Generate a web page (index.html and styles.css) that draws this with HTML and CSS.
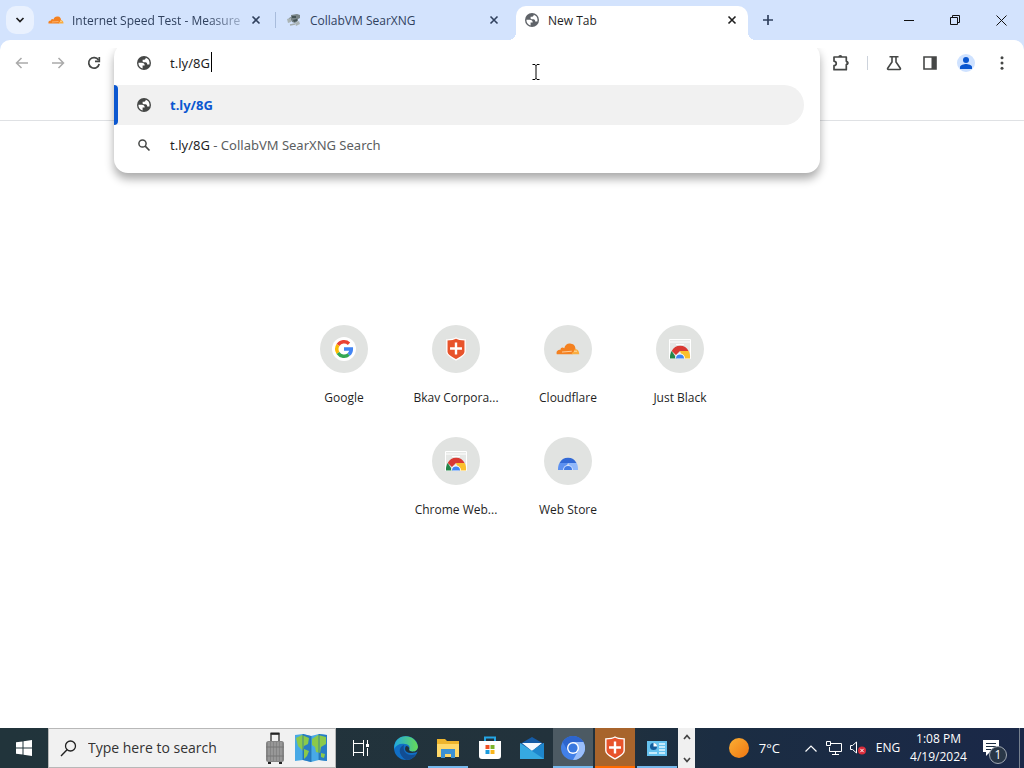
FILE: index.html
```html
<!DOCTYPE html>
<html lang="en">
<head>
<meta charset="utf-8">
<title>New Tab</title>
<link rel="stylesheet" href="styles.css">
</head>
<body>
<svg class="defs" width="0" height="0" aria-hidden="true">
  <symbol id="globe" viewBox="2 2 20 20"><circle cx="12" cy="12" r="10" fill="currentColor"/><path fill="#fff" d="M4 11.500h5c2.500 0 4 1.500 4 4h-3v4.200C6.500 19 4 16 4 11.500zM14.500 4.400v.6c0 1.300-1 2.200-2.200 2.200H10v2.300c0 1.300 1 1.500 2 1.500h2c2 0 2.500 1.500 2.500 3h3.200c1-4.600-1.200-8.500-5.200-9.600z"/></symbol>
  <symbol id="cross" viewBox="0 0 10 10"><path d="M1.500 1.500l7 7M8.500 1.500l-7 7" fill="none" stroke="currentColor" stroke-width="1.600"/></symbol>
  <symbol id="cloud" viewBox="0 0 32 16"><path fill="#f48120" d="M1 15c-1-4 1-6 5-6 0-3 3-4 5-2 1-5 5-7 9-6 4 0 6 4 6 7l-4 7z"/><path fill="#faad3f" d="M21 15c0-3 3-2 4-7 4 0 6 3 6 7z"/><path d="M8 12l13-1M24 11l4 0" stroke="#ffe3c0" stroke-width="1"/></symbol>
  <symbol id="webstore" viewBox="0 0 24 24"><path fill="#e6e8e6" stroke="#fff" d="M1.500 2.500h21v19h-21z"/><path d="M2 5h20M8 7.500h8" stroke="#fff"/><path fill="#d93a33" d="M3.700 14a9.500 9.500 0 0 1 16.900 0H12l-4 4z"/><path fill="#23864a" d="M2 21.500c-.3-3 .5-5.500 1.700-7.500l5 7.500z"/><path fill="#fbc02d" d="M12 14h8.600c1.300 2 1.700 4.500 1.400 7.500h-7z"/><path fill="#fff" d="M7 21.500a5 5 0 0 1 10 0z"/><path fill="#4285f4" d="M8 21.500a4 4 0 0 1 8 0z"/></symbol>
  <symbol id="shield" viewBox="0 0 24 26"><path fill="#e8532b" stroke="#fff" stroke-width="1.500" d="M12 1c3 2 7 2 10 2v13c0 4-5 6-10 9C7 22 2 20 2 16V3c3 0 7 0 10-2z"/><path d="M12 6v13M5.500 12.500h13" stroke="#fff" stroke-width="2.600"/></symbol>
</svg>

<div class="screen">
  <header class="tabstrip">
    <button class="tab-search" aria-label="Search tabs"><svg width="10" height="10" viewBox="0 0 10 10"><path d="M1.500 3L5 6.500 8.500 3" fill="none" stroke="#1f1f1f" stroke-width="1.700"/></svg></button>
    <nav class="tabs" aria-label="Tabs">
      <div class="tab">
        <svg class="favicon" width="16" height="16"><use href="#cloud"/></svg>
        <span class="tab-title faded">Internet Speed Test - Measure</span>
        <button class="tab-close" aria-label="Close tab"><svg width="10" height="10"><use href="#cross"/></svg></button>
      </div>
      <div class="tab divided">
        <svg class="favicon" width="16" height="16" viewBox="0 0 16 16"><path fill="#788487" d="M5 3l6-1 3 1v3l-2 1v2l-3 2-3-1-1-2-3 1 1-3 2-1z"/><path fill="#aab4b5" d="M1 7l4-1v4l-3 1zM9 11l4-2 1 3-4 2z"/><path fill="#445355" d="M6 4h4v2H6zM7 8l4-1v2l-3 1z"/><path d="M4 13l5-1" stroke="#a3acac" stroke-width="1.500"/></svg>
        <span class="tab-title">CollabVM SearXNG</span>
        <button class="tab-close" aria-label="Close tab"><svg width="10" height="10"><use href="#cross"/></svg></button>
      </div>
      <div class="tab active">
        <svg class="favicon gray" width="14" height="14"><use href="#globe"/></svg>
        <span class="tab-title">New Tab</span>
        <button class="tab-close" aria-label="Close tab"><svg width="10" height="10"><use href="#cross"/></svg></button>
      </div>
    </nav>
    <button class="new-tab" aria-label="New tab"><svg width="12" height="12" viewBox="0 0 12 12"><path d="M6 1v10M1 6h10" stroke="#30415e" stroke-width="1.700"/></svg></button>
    <div class="window-controls">
      <button aria-label="Minimize"><svg width="10" height="10" viewBox="0 0 10 10"><path d="M0 5.500h10" stroke="#111"/></svg></button>
      <button aria-label="Restore"><svg width="10" height="10" viewBox="0 0 10 10"><path d="M.5 2.500h7v7h-7zM2.500 2.500v-2h7v7h-2" fill="none" stroke="#111"/></svg></button>
      <button aria-label="Close"><svg width="11" height="11" viewBox="0 0 11 11"><path d="M.5.5l10 10M10.500.5l-10 10" stroke="#111"/></svg></button>
    </div>
  </header>

  <section class="chrome">
    <div class="toolbar">
      <div class="nav-buttons">
        <button class="disabled" aria-label="Back"><svg width="14" height="12" viewBox="0 0 14 12"><path d="M13 6H1.500M6.500 1l-5 5 5 5" fill="none" stroke="currentColor" stroke-width="1.500"/></svg></button>
        <button class="disabled" aria-label="Forward"><svg width="14" height="12" viewBox="0 0 14 12"><path d="M1 6h11.500M7.500 1l5 5-5 5" fill="none" stroke="currentColor" stroke-width="1.500"/></svg></button>
        <button aria-label="Reload"><svg width="14" height="14" viewBox="0 0 14 14"><path d="M11.500 4A5.300 5.300 0 1 0 12.200 8" fill="none" stroke="currentColor" stroke-width="1.700"/><path d="M12.300 1v4.400H8" fill="none" stroke="currentColor" stroke-width="1.700"/></svg></button>
      </div>
      <div class="omnibox">
        <div class="popup">
          <div class="address-row">
            <svg width="14" height="14"><use href="#globe"/></svg>
            <input type="text" value="t.ly/8G" aria-label="Address and search bar">
            <span class="caret"></span>
          </div>
          <button class="suggestion selected"><svg width="14" height="14"><use href="#globe"/></svg><b>t.ly/8G</b></button>
          <button class="suggestion"><svg width="14" height="14" viewBox="0 0 14 14"><circle cx="5.500" cy="5.500" r="3.600" fill="none" stroke="currentColor" stroke-width="1.500"/><path d="M8.200 8.200l4.300 4.300" stroke="currentColor" stroke-width="1.700"/></svg><span>t.ly/8G<span class="hint"> - CollabVM SearXNG Search</span></span></button>
          <svg class="pointer" width="8" height="16" viewBox="0 0 8 16"><path d="M.5.5H3l1 1 1-1h2.500M4 1v14M.5 15.500H3l1-1 1 1h2.500" fill="none" stroke="#000"/></svg>
        </div>
      </div>
      <div class="actions">
        <button aria-label="Extensions"><svg width="18" height="18" viewBox="0 0 18 18"><path d="M2 3h12.300v4.300c2 .2 2 3.200 0 3.400v5H2v-4c3-.5 3-4 0-4.500z" fill="none" stroke="currentColor" stroke-width="1.700" stroke-linejoin="round"/><path d="M6.300 3a2 2 0 0 1 4 0zM14.500 7a2 2 0 0 1 0 4z" fill="currentColor"/></svg></button>
        <span class="separator"></span>
        <button aria-label="Experiments"><svg width="16" height="16" viewBox="0 0 16 16"><path d="M3.500 1.800h9M6 2v5l-4.300 6.300c-.4.600 0 1.200.6 1.200h11.400c.6 0 1-.6.600-1.200L10 7V2" fill="none" stroke="currentColor" stroke-width="1.600"/></svg></button>
        <button aria-label="Side panel"><svg width="14" height="14" viewBox="0 0 14 14"><path d="M1 1h12v12H1z" fill="none" stroke="currentColor" stroke-width="1.600"/><path d="M8.500 1H13v12H8.500z" fill="currentColor"/></svg></button>
        <button aria-label="Profile"><svg width="18" height="18" viewBox="0 0 18 18"><circle cx="9" cy="9" r="9" fill="#cfe2ff"/><circle cx="9" cy="6" r="3" fill="#0b57d0"/><path d="M3 15v-2c0-2 4-3 6-3s6 1 6 3v2z" fill="#0b57d0"/></svg></button>
        <button aria-label="Menu"><svg width="4" height="14" viewBox="0 0 4 14" fill="currentColor"><circle cx="2" cy="1.700" r="1.500"/><circle cx="2" cy="7" r="1.500"/><circle cx="2" cy="12.300" r="1.500"/></svg></button>
      </div>
    </div>
    <div class="bookmarks"></div>
  </section>

  <main class="page">
    <div class="shortcuts">
      <a href="#"><span class="disc"><svg width="24" height="24" viewBox="0 0 24 24"><circle cx="12" cy="12" r="12" fill="#fff"/><g fill="none" stroke-width="3.500"><path d="M6 8a7.300 7.300 0 0 1 11-1.300" stroke="#ea4335"/><path d="M6 8a7.300 7.300 0 0 0 0 8" stroke="#fbbc05"/><path d="M6 16a7.300 7.300 0 0 0 10.800 1.500" stroke="#34a853"/><path d="M16.800 17.500A7 7 0 0 0 19.300 12H12" stroke="#4285f4"/></g></svg></span><span class="label">Google</span></a>
      <a href="#"><span class="disc"><svg width="22" height="24"><use href="#shield"/></svg></span><span class="label">Bkav Corpora...</span></a>
      <a href="#"><span class="disc"><svg width="24" height="12"><use href="#cloud"/></svg></span><span class="label">Cloudflare</span></a>
      <a href="#"><span class="disc"><svg width="24" height="24"><use href="#webstore"/></svg></span><span class="label">Just Black</span></a>
      <a href="#"><span class="disc"><svg width="24" height="24"><use href="#webstore"/></svg></span><span class="label">Chrome Web...</span></a>
      <a href="#"><span class="disc"><svg width="24" height="24" viewBox="0 0 24 24"><path fill="#3269d6" d="M3.500 14a9.500 9.500 0 0 1 17 0z"/><path fill="#5d91f0" d="M3.500 14C2.300 16 2 18 2 21h7l3-7z"/><path fill="#91b8fa" d="M12 14h8.500c1.300 2 1.500 4 1.500 7h-7z"/><path fill="#cfdfff" d="M7 21a5 5 0 0 1 10 0z"/><path fill="#427ce5" d="M8 21a4 4 0 0 1 8 0z"/></svg></span><span class="label">Web Store</span></a>
    </div>
  </main>

  <footer class="taskbar">
    <button class="start" aria-label="Start"><svg width="16" height="16" viewBox="0 0 16 16" fill="#fff"><path d="M0 2.300L6.500 1.400v6.100H0zM7.500 1.200L16 0v7.500H7.500zM0 8.500h6.500v6.100L0 13.700zM7.500 8.500H16V16l-8.500-1.200z"/></svg></button>
    <label class="search">
      <svg width="17" height="17" viewBox="0 0 17 17"><circle cx="10.500" cy="6" r="5" fill="none" stroke="#222" stroke-width="1.300"/><path d="M7 9.700L1 16" stroke="#222" stroke-width="1.400"/></svg>
      <input type="text" placeholder="Type here to search" aria-label="Type here to search">
      <svg width="20" height="33" viewBox="0 0 20 33"><path d="M6 9V2h8v7" fill="none" stroke="#474747" stroke-width="1.500"/><path d="M5.500 1.500h9" stroke="#222" stroke-width="2"/><rect x="1" y="9" width="18" height="21" rx="2.500" fill="#858585"/><path d="M4 10v19M7 10v19M10 10v19M13 10v19M16 10v19" stroke="#aaa"/><path d="M1 15h18M1 24h18" stroke="#777"/><path d="M3 30h3v2H3zM14 30h3v2h-3z" fill="#222"/></svg>
      <svg width="34" height="30" viewBox="0 0 34 30"><path d="M1 2l8-1 8 2 8-2 8 1v26l-8-1-8 2-8-2-8 1z" fill="#48a9e6"/><path d="M9 1l8 2v26l-8-2zM25 1l8 1v26l-8-1z" fill="#287cc5"/><path d="M2 5l6-3 7 3-1 6-4 2-1 5-5-5zM10 16l5 2-2 5-3 3zM18 6l6-4 8 2v7l-5 3-1 6-4-1-1-5-3-2zM27 20l4 1-1 4-3-1z" fill="#8bc94a"/><path d="M9 1v26M17 3v26M25 1v26" stroke="#216da8" stroke-width=".7"/></svg>
    </label>
    <button class="task-view" aria-label="Task View"><svg width="17" height="16" viewBox="0 0 17 16" fill="none" stroke="#fff"><path d="M1.500 0v3M11.500 0v3M1 3.500h11M1.500 3.500v9M11.500 3.500v9M1 12.500h11M1.500 13v3M11.500 13v3M15.500 0v4M15.500 8v8"/><path d="M14 4h3v3h-3z" fill="#fff" stroke="none"/></svg></button>
    <div class="apps">
      <button aria-label="Edge"><svg width="24" height="24" viewBox="0 0 24 24"><defs><linearGradient id="eg" x1="0" x2="1"><stop stop-color="#21a9df"/><stop offset="1" stop-color="#67db55"/></linearGradient></defs><circle cx="12" cy="12" r="12" fill="#116fc5"/><path d="M.3 10C2-3 22-3 24 11c0 5-7 6-9 3 2-4-1-6-4-6C6 7 2 9 .3 13z" fill="url(#eg)"/><path d="M10 9c-6 2-6 10 2 15 5 0 8-3 10-6-8 3-14-2-12-9z" fill="#124d93"/><path d="M12 10c-3 5 1 9 11 6 2-2 1-4 1-5 0 5-7 6-9 3 1-2-1-4-3-4z" fill="#22323c"/></svg></button>
      <button class="open" aria-label="File Explorer"><svg width="22" height="19" viewBox="0 0 22 19"><path d="M0 0h8l2 2h12v16H0z" fill="#eeb52d"/><path d="M0 5h22v13H0z" fill="#ffd96a"/><path d="M4 10h14v9h-4v-4H8v4H4z" fill="#3b91d4"/></svg></button>
      <button aria-label="Microsoft Store"><svg width="24" height="24" viewBox="0 0 24 24"><path d="M7 6V1.500h10V6" fill="none" stroke="#24a6e6" stroke-width="2"/><path d="M1 5h22v15c0 2-1 3-3 3H4c-2 0-3-1-3-3z" fill="#fff"/><path d="M7.500 9h4v4h-4z" fill="#f05023"/><path d="M12.500 9h4v4h-4z" fill="#7db52b"/><path d="M7.500 14h4v4h-4z" fill="#1b9bdd"/><path d="M12.500 14h4v4h-4z" fill="#f9b51b"/></svg></button>
      <button aria-label="Mail"><svg width="24" height="22" viewBox="0 0 24 22"><path d="M0 7l12-7 12 7v15H0z" fill="#155ba5"/><path d="M2 6h20L12 14z" fill="#f5faff"/><path d="M0 6l12 8 12-8v16H0z" fill="#36a9e1"/><path d="M12 14l12-8v16z" fill="#1e86cc"/></svg></button>
      <button class="current" aria-label="Chromium"><svg width="24" height="24" viewBox="0 0 24 24"><circle cx="12" cy="12" r="12" fill="#4280e8"/><path d="M1.600 6A12 12 0 0 1 22.400 6H12L7 15z" fill="#2d65ce"/><path d="M12 6h10.400A12 12 0 0 1 12 24l5-9z" fill="#9abefa"/><circle cx="12" cy="12" r="6" fill="#fff"/><circle cx="12" cy="12" r="4.600" fill="#3978df"/></svg></button>
      <button class="alert" aria-label="Bkav"><svg width="22" height="24"><use href="#shield"/></svg></button>
      <button class="open" aria-label="Control Panel"><svg width="20" height="15" viewBox="0 0 20 15"><path d="M0 0h20v15H0z" fill="#66c2ef"/><circle cx="6.500" cy="5.500" r="3.500" fill="#145c9c"/><path d="M6.500 5.500V2A3.500 3.500 0 0 1 10 5.500z" fill="#fff"/><path d="M12 3h6M12 6h6M12 9h6M2 12h8M12 12h6" stroke="#e6f8ff" stroke-width="1.300"/></svg></button>
    </div>
    <div class="scroller">
      <button aria-label="Scroll up"><svg width="8" height="6" viewBox="0 0 8 6"><path d="M1 5l3-3.500L7 5" fill="none" stroke="#444" stroke-width="1.700"/></svg></button>
      <button aria-label="Scroll down"><svg width="8" height="6" viewBox="0 0 8 6"><path d="M1 1l3 3.500L7 1" fill="none" stroke="#444" stroke-width="1.700"/></svg></button>
    </div>
    <div class="tray">
      <button class="weather"><span class="sun"></span>7°C</button>
      <button class="chevron" aria-label="Show hidden icons"><svg width="12" height="7" viewBox="0 0 12 7"><path d="M.5 6.500L6 1l5.500 5.500" fill="none" stroke="#fff" stroke-width="1.200"/></svg></button>
      <button class="tray-icon" aria-label="Network"><svg width="16" height="14" viewBox="0 0 16 14" fill="none" stroke="#fff"><path d="M5 2.500h10.500v8H3.500V6M9.500 11v2M6 13.500h7M.5.500h4v4h-4z"/></svg></button>
      <button class="tray-icon" aria-label="Volume muted"><svg width="16" height="14" viewBox="0 0 16 14"><path d="M.5 4.500h2l4-3.500v11l-4-3.500h-2z" fill="none" stroke="#fff"/><circle cx="12" cy="9.500" r="4" fill="#d92b3a"/><path d="M10.300 7.800l3.400 3.400M13.700 7.800l-3.400 3.400" stroke="#fff"/></svg></button>
      <button class="lang">ENG</button>
      <button class="clock"><span>1:08 PM</span><span>4/19/2024</span></button>
      <button class="notices" aria-label="1 notification"><svg width="18" height="18" viewBox="0 0 18 18"><path d="M1 1h16v12H8l-4 4v-4H1z" fill="#fff"/><path d="M4 4.500h10M4 7.500h10M4 10.500h6" stroke="#1b2d42"/></svg><span class="badge">1</span></button>
      <button class="desktop" aria-label="Show desktop"></button>
    </div>
  </footer>
</div>
</body>
</html>
```
FILE: styles.css
```css
* { box-sizing: border-box; }
body { margin: 0; font: 12px/16px "Open Sans", "Noto Sans", sans-serif; color: #1f1f1f; background: #fff; }
button, input { font: inherit; color: inherit; border: 0; padding: 0; margin: 0; background: none; outline: 0; }
button { display: flex; align-items: center; justify-content: center; }
svg { display: block; flex: none; }
.defs { position: absolute; }
.screen { min-height: 100vh; display: flex; flex-direction: column; }

.tabstrip { display: flex; align-items: center; height: 40px; padding-left: 6px; background: #d3e3fd; }
.tab-search { width: 28px; height: 28px; border-radius: 10px; background: #e9f1fe; }
.tabs { display: flex; align-self: flex-end; gap: 6px; margin-left: 6px; }
.tab { position: relative; display: flex; align-items: center; gap: 8px; width: 232px; height: 34px; padding: 0 8px 6px; color: #30415e; }
.favicon { width: 16px; }
.favicon.gray { color: #5f6368; }
.tab-title { flex: 1; padding-top: 2px; overflow: hidden; white-space: nowrap; }
.faded { -webkit-mask-image: linear-gradient(90deg, #000 80%, #0005); mask-image: linear-gradient(90deg, #000 80%, #0005); }
.tab-close { width: 16px; height: 16px; }
.divided::before { content: ""; position: absolute; left: -3px; top: 6px; width: 1px; height: 16px; background: #a8bcdc; }
.active { background: #fff; border-radius: 10px 10px 0 0; color: #1f1f1f; }
.active::before, .active::after { content: ""; position: absolute; bottom: 0; width: 8px; height: 8px; }
.active::before { left: -8px; background: radial-gradient(circle at 0 0, transparent 8px, #fff 8px); }
.active::after { right: -8px; background: radial-gradient(circle at 100% 0, transparent 8px, #fff 8px); }
.new-tab { width: 28px; height: 28px; margin-left: 6px; }
.window-controls { display: flex; margin-left: auto; }
.window-controls button { width: 46px; height: 40px; }

.chrome { background: linear-gradient(#d3e3fd 10px, #fff 10px); border-bottom: 1px solid #dfe1e4; }
.toolbar { display: flex; height: 46px; padding-left: 4px; background: #fff; border-radius: 10px 10px 0 0; color: #454746; }
.bookmarks { height: 34px; }
.nav-buttons { display: flex; width: 110px; }
.nav-buttons button { width: 36px; }
.nav-buttons .disabled { color: #aaa; }
.omnibox { position: relative; flex: 1; }
.popup { position: absolute; z-index: 2; top: 3px; left: 0; right: 0; padding-bottom: 8px; background: #fff; border-radius: 14px; box-shadow: 0 6px 10px #0005; clip-path: inset(5px -16px -20px -16px); font-family: "Noto Sans", "Open Sans", sans-serif; font-size: 13px; line-height: 20px; color: #1f1f1f; }
.address-row { position: relative; display: flex; align-items: center; gap: 19px; height: 42px; padding: 0 23px 2px; }
.address-row svg, .suggestion svg { color: #454746; }
.address-row input { flex: 1; min-width: 0; }
.caret { position: absolute; left: 97px; top: 9px; width: 1px; height: 20px; background: #000; }
.suggestion { position: relative; width: calc(100% - 16px); height: 40px; padding-left: 23px; gap: 19px; justify-content: flex-start; border-radius: 0 20px 20px 0; }
.selected { background: #f1f1f1; color: #0b57d0; }
.selected::before { content: ""; position: absolute; left: 0; top: 0; bottom: 0; width: 4px; background: #0b57d0; border-radius: 0 4px 4px 0; }
.hint { color: #5b5e61; }
.pointer { position: absolute; left: 418px; top: 21px; }
.actions { display: flex; align-items: center; width: 204px; padding-left: 3px; }
.actions button { width: 36px; height: 46px; }
.separator { width: 1px; height: 14px; margin: 0 8px; background: #cdd3dc; }

.page { flex: 1; padding-top: 188px; }
.shortcuts { display: flex; flex-wrap: wrap; justify-content: center; max-width: 448px; margin: 0 auto; }
.shortcuts a { display: flex; flex-direction: column; align-items: center; width: 112px; height: 112px; padding-top: 16px; gap: 17px; color: inherit; text-decoration: none; }
.disc { display: grid; place-items: center; width: 48px; height: 48px; border-radius: 50%; background: #e1e3e1; }
.label { white-space: nowrap; }

.taskbar { display: flex; height: 40px; color: #fff; background: linear-gradient(90deg, #21343b, #22323c 55%, #1b2d42 70%, #1a2848); }
.start { width: 48px; }
.search { display: flex; align-items: center; gap: 9px; width: 288px; padding: 0 7px 0 11px; background: #f1f1f1; border: 1px solid #b8b8b8; }
.search input { flex: 1; min-width: 0; margin-left: 2px; font-size: 14px; line-height: 20px; color: #333; }
.search input::placeholder { color: #333; opacity: 1; }
.task-view { width: 48px; }
.apps { display: flex; gap: 2px; width: 291px; margin-left: 2px; }
.apps button { flex: 1; }
.open { box-shadow: inset 0 -2px #76b9ed; }
.current { box-shadow: inset 0 -2px #76b9ed; background: #4c5a63; }
.apps .current { background: #4c5a63; }
.apps .alert { background: #a8642c; box-shadow: inset 0 -2px #ff6a00; }
.scroller { display: flex; flex-direction: column; justify-content: space-between; width: 17px; margin-left: 1px; padding: 6px 0 5px; background: #f0f0f0; }
.scroller button { width: 100%; }
.tray { display: flex; flex: 1; justify-content: flex-end; }
.weather { gap: 10px; margin-right: 20px; font-size: 13px; }
.sun { width: 20px; height: 20px; border-radius: 50%; background: linear-gradient(135deg, #fbb034, #ef7612); }
.chevron { width: 22px; }
.tray-icon { width: 24px; }
.lang { width: 36px; }
.clock { flex-direction: column; width: 65px; line-height: 18px; }
.notices { position: relative; width: 48px; padding-right: 9px; }
.badge { position: absolute; left: 18px; bottom: 4px; width: 18px; height: 18px; border-radius: 50%; border: 1px solid #a0a8b2; background: #293747; font-size: 12px; line-height: 16px; text-align: center; }
.desktop { width: 5px; border-left: 1px solid #76808e; }
```
